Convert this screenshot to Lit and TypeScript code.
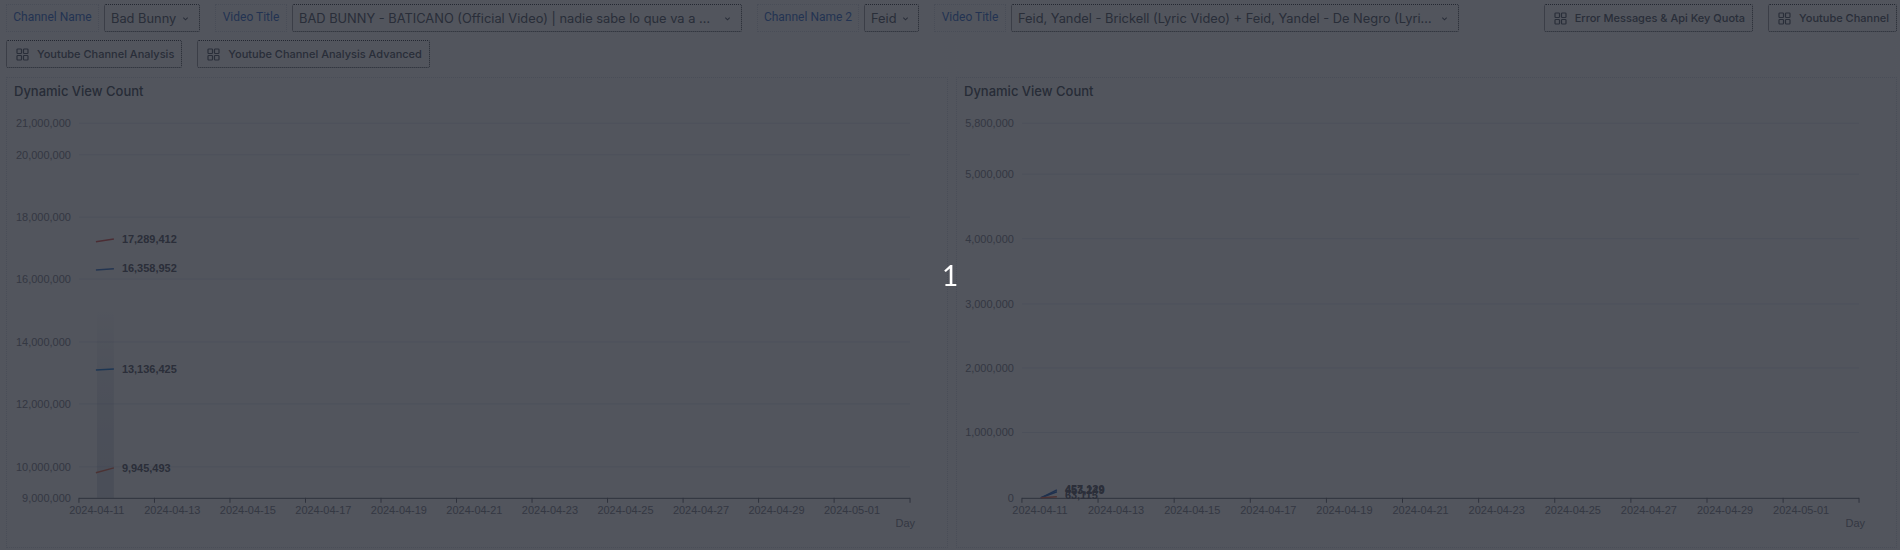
import { LitElement, css, html, svg } from "lit";
import { customElement, property } from "lit/decorators.js";

interface Series {
  color: string;
  x1: number;
  y1: number;
  x2: number;
  y2: number;
  label: string;
  labelY: number;
}

interface ChartConfig {
  left: number;
  right: number;
  zero: number;
  step: number;
  ticks: { label: string; y: number }[];
  series: Series[];
  bar?: { x: number; w: number; top: number };
}

const DATES = ["04-11", "04-13", "04-15", "04-17", "04-19", "04-21", "04-23", "04-25", "04-27", "04-29", "05-01"];

// values are in the svg's own coordinates, top is 106 on the page
const LEFT_CHART: ChartConfig = {
  left: 72,
  right: 904,
  zero: 392,
  step: 75.6,
  bar: { x: 90, w: 17, top: 195 },
  ticks: [
    { label: "21,000,000", y: 17 },
    { label: "20,000,000", y: 48.6 },
    { label: "18,000,000", y: 111 },
    { label: "16,000,000", y: 173 },
    { label: "14,000,000", y: 236 },
    { label: "12,000,000", y: 298 },
    { label: "10,000,000", y: 361 },
    { label: "9,000,000", y: 392 },
  ],
  series: [
    { color: "#e8837f", x1: 89, y1: 135.7, x2: 107, y2: 133, label: "17,289,412", labelY: 133 },
    { color: "#6f9bd8", x1: 89, y1: 164, x2: 107, y2: 162.7, label: "16,358,952", labelY: 162 },
    { color: "#5a9ee0", x1: 89, y1: 264, x2: 107, y2: 263, label: "13,136,425", labelY: 263 },
    { color: "#e8937f", x1: 89, y1: 367, x2: 107, y2: 362, label: "9,945,493", labelY: 362 },
  ],
};

const RIGHT_CHART: ChartConfig = {
  left: 65,
  right: 903,
  zero: 392,
  step: 76.2,
  ticks: [
    { label: "5,800,000", y: 17 },
    { label: "5,000,000", y: 68 },
    { label: "4,000,000", y: 132.6 },
    { label: "3,000,000", y: 198 },
    { label: "2,000,000", y: 262 },
    { label: "1,000,000", y: 326.6 },
    { label: "0", y: 392 },
  ],
  series: [
    { color: "#5f8fd0", x1: 84, y1: 392, x2: 100, y2: 384, label: "457,129", labelY: 383 },
    { color: "#5f8fd0", x1: 84, y1: 392, x2: 100, y2: 386, label: "453,249", labelY: 384 },
    { color: "#e8937f", x1: 84, y1: 392, x2: 100, y2: 391, label: "63,115", labelY: 389 },
  ],
};

@customElement("view-chart")
class ViewChart extends LitElement {
  static styles = css`
    :host { display: block; }
    svg { display: block; width: 100%; height: 441px; }
    text { font-family: "Liberation Sans", Arial, sans-serif; font-size: 11px; fill: #a2a4ac; }
    .value { font-weight: 700; fill: #85878f; }
    .grid { stroke: #ebeef5; stroke-width: 1; }
    .axis { stroke: #8f9199; stroke-width: 1; }
  `;

  @property({ attribute: false }) config!: ChartConfig;

  render() {
    const c = this.config;
    const tickXs = DATES.map((_, i) => c.left + c.step * i);
    return html`
      <svg viewBox="0 0 ${c.right + 37} 441">
        <defs>
          <linearGradient id="barFill" x1="0" y1="0" x2="0" y2="1">
            <stop offset="0" stop-color="#9aa6bd" stop-opacity="0" />
            <stop offset="0.4" stop-color="#9aa6bd" stop-opacity="0.16" />
            <stop offset="1" stop-color="#9aa6bd" stop-opacity="0.26" />
          </linearGradient>
        </defs>
        ${c.ticks.map(
          (t) => svg`
            ${t.y !== c.zero ? svg`<line class="grid" x1=${c.left} x2=${c.right} y1=${t.y} y2=${t.y} />` : ""}
            <text x=${c.left - 8} y=${t.y + 4} text-anchor="end">${t.label}</text>
          `
        )}
        ${c.bar
          ? svg`<rect x=${c.bar.x} y=${c.bar.top} width=${c.bar.w} height=${c.zero - c.bar.top} fill="url(#barFill)" />`
          : ""}
        <line class="axis" x1=${c.left} x2=${c.right} y1=${c.zero + 0.5} y2=${c.zero + 0.5} />
        ${[...tickXs, c.right].map(
          (x) => svg`<line class="axis" x1=${x} x2=${x} y1=${c.zero} y2=${c.zero + 5} />`
        )}
        ${DATES.map(
          (d, i) => svg`<text x=${c.left - 1 + c.step / 4 + c.step * i} y=${c.zero + 16} text-anchor="middle">2024-${d}</text>`
        )}
        <text x="909" y=${c.zero + 29} text-anchor="end">Day</text>
        ${c.series.map(
          (s) => svg`
            <line x1=${s.x1} y1=${s.y1} x2=${s.x2} y2=${s.y2} stroke=${s.color} stroke-width="1.5" />
            <text class="value" x=${s.x2 + 8} y=${s.labelY + 4}>${s.label}</text>
          `
        )}
      </svg>
    `;
  }
}

@customElement("app-root")
export class AppRoot extends LitElement {
  static styles = css`
    :host {
      display: block;
      position: relative;
      width: 1900px;
      height: 550px;
      overflow: hidden;
      background: #ffffff;
      color: #1f2937;
      font-family: Inter, "Liberation Sans", sans-serif;
    }

    .filters {
      display: flex;
      flex-wrap: wrap;
      align-items: stretch;
      gap: 8px 15px;
      padding: 4px 3px 0 6px;
    }

    .group { display: flex; gap: 5px; }

    .label {
      display: flex;
      align-items: center;
      justify-content: center;
      height: 28px;
      box-sizing: border-box;
      padding-bottom: 2px;
      border: 1px dotted #e4e7ec;
      color: #6f97dc;
      font-family: Roboto, "Liberation Sans", sans-serif;
      font-size: 12px;
    }
    .label.name { width: 93px; }
    .label.title { width: 72px; }
    .label.name2 { width: 102px; }

    .select {
      display: flex;
      align-items: center;
      justify-content: space-between;
      gap: 5px;
      height: 28px;
      box-sizing: border-box;
      padding: 0 10px 0 6px;
      border: 1px dotted #70747a;
      border-radius: 2px;
      font-size: 12.85px;
      color: #80858e;
    }
    .select span { white-space: nowrap; }
    .select svg { flex: none; width: 7px; height: 7px; }
    .w-bad { width: 96px; }
    .w-feid { width: 55px; }
    .w-wide { width: 450px; gap: 12px; }
    .w-wide2 { width: 448px; }
    .w-wide span, .w-wide2 span { overflow: hidden; text-overflow: ellipsis; }

    .btn {
      display: flex;
      align-items: center;
      gap: 8px;
      height: 28px;
      box-sizing: border-box;
      padding: 0 7px 0 9px;
      border: 1px dotted #70747a;
      border-radius: 2px;
      font-size: 11px;
      font-weight: 500;
      color: #80858e;
      white-space: nowrap;
    }
    .btn svg { flex: none; width: 13px; height: 13px; }
    .push { margin-left: auto; }

    .panels {
      display: grid;
      grid-template-columns: 942px 941px;
      gap: 8px;
      margin: 9px 3px 0 6px;
    }
    .panel {
      height: 471px;
      box-sizing: border-box;
      border: 1px dotted #e4e7ec;
    }
    .panel h3 {
      margin: 0;
      height: 28px;
      padding: 6px 0 0 7px;
      box-sizing: border-box;
      font-size: 13px;
      font-weight: 500;
      line-height: 15px;
      color: #7a7f88;
    }

    .overlay {
      position: absolute;
      inset: 0;
      display: flex;
      align-items: center;
      justify-content: center;
      background: rgba(0, 5, 16, 0.68);
      backdrop-filter: blur(0.5px);
      color: #ffffff;
      font-family: Lato, "Liberation Sans", sans-serif;
      font-size: 28px;
    }
  `;

  private chevron() {
    return html`<svg viewBox="0 0 8 8" fill="none" stroke="#80858e" stroke-width="1.2">
      <path d="M1.5 3 L4 5.5 L6.5 3" />
    </svg>`;
  }

  private gridIcon() {
    return html`<svg viewBox="0 0 13 13" fill="none" stroke="#80858e" stroke-width="1.2">
      <rect x="1" y="1" width="4.5" height="4.5" rx="0.8" />
      <rect x="7.5" y="1" width="4.5" height="4.5" rx="0.8" />
      <rect x="1" y="7.5" width="4.5" height="4.5" rx="0.8" />
      <rect x="7.5" y="7.5" width="4.5" height="4.5" rx="0.8" />
    </svg>`;
  }

  private filter(labelClass: string, label: string, selectClass: string, value: string) {
    return html`
      <div class="group">
        <div class="label ${labelClass}">${label}</div>
        <div class="select ${selectClass}"><span>${value}</span>${this.chevron()}</div>
      </div>
    `;
  }

  private button(text: string, extra = "") {
    return html`<div class="btn ${extra}">${this.gridIcon()}${text}</div>`;
  }

  render() {
    return html`
      <div class="filters">
        ${this.filter("name", "Channel Name", "w-bad", "Bad Bunny")}
        ${this.filter("title", "Video Title", "w-wide", "BAD BUNNY - BATICANO (Official Video) | nadie sabe lo que va a pasar mañana")}
        ${this.filter("name2", "Channel Name 2", "w-feid", "Feid")}
        ${this.filter("title", "Video Title", "w-wide2", "Feid, Yandel - Brickell (Lyric Video) + Feid, Yandel - De Negro (Lyric Video)")}
        ${this.button("Error Messages & Api Key Quota", "push")}
        ${this.button("Youtube Channel")}
        ${this.button("Youtube Channel Analysis")}
        ${this.button("Youtube Channel Analysis Advanced")}
      </div>
      <div class="panels">
        <div class="panel">
          <h3>Dynamic View Count</h3>
          <view-chart .config=${LEFT_CHART}></view-chart>
        </div>
        <div class="panel">
          <h3>Dynamic View Count</h3>
          <view-chart .config=${RIGHT_CHART}></view-chart>
        </div>
      </div>
      <div class="overlay">1</div>
    `;
  }
}
